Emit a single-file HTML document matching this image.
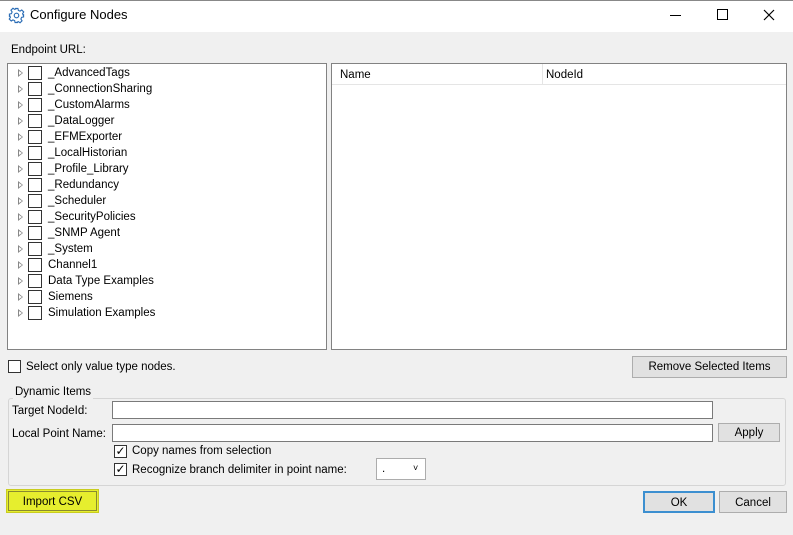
<!DOCTYPE html><html><head><style>
*{box-sizing:border-box}body{margin:0;width:793px;height:535px;background:#f0f0f0;font-family:"Liberation Sans",sans-serif;font-size:11.5px;line-height:16px;color:#000;position:relative;overflow:hidden}
.a{position:absolute}
.cb{position:absolute;width:13px;height:13px;border:1px solid #333;background:#fff}
.btn{position:absolute;background:#e1e1e1;border:1px solid #adadad;text-align:center}
.inp{position:absolute;background:#fff;border:1px solid #7a7a7a}
.row{position:absolute;left:0;height:16px;width:300px}
.row .tri{position:absolute;left:10px;top:4px;width:0;height:0;border-left:5px solid #888;border-top:4px solid transparent;border-bottom:4px solid transparent}
.row .tri:after{content:"";position:absolute;left:-4px;top:-2px;border-left:3px solid #fff;border-top:2px solid transparent;border-bottom:2px solid transparent}
.row .c{position:absolute;left:20px;top:1px;width:14px;height:14px;border:1px solid #333;background:#fff}
.row span{position:absolute;left:40px;top:0px}
</style></head><body>
<div class="a" style="left:0;top:0;width:793px;height:32px;background:#fff;border-top:1px solid #888"></div>
<svg class="a" style="left:8px;top:7px" width="17" height="17" viewBox="0 0 24 24" fill="none" stroke="#2a6cb5" stroke-width="1.6"><circle cx="12" cy="12" r="3.2"/><path d="M10 2h4l.6 2.8 2.4 1 2.4-1.6 2.8 2.8-1.6 2.4 1 2.4L22 10v4l-2.8.6-1 2.4 1.6 2.4-2.8 2.8-2.4-1.6-2.4 1L14 22h-4l-.6-2.8-2.4-1-2.4 1.6-2.8-2.8 1.6-2.4-1-2.4L2 14v-4l2.8-.6 1-2.4-1.6-2.4 2.8-2.8 2.4 1.6 2.4-1z"/></svg>
<div class="a" style="left:30px;top:7px;font-size:13px">Configure Nodes</div>
<div class="a" style="left:670px;top:15px;width:11px;height:1px;background:#000"></div>
<div class="a" style="left:717px;top:9px;width:11px;height:11px;border:1px solid #000"></div>
<svg class="a" style="left:763px;top:9px" width="12" height="12"><path d="M1 1L11 11M11 1L1 11" stroke="#000" stroke-width="1.2"/></svg>
<div class="a" style="left:11px;top:42px">Endpoint URL:</div>
<div class="a" style="left:7px;top:63px;width:320px;height:287px;background:#fff;border:1px solid #828282">
<div class="row" style="top:1px"><i class="tri"></i><i class="c"></i><span>_AdvancedTags</span></div>
<div class="row" style="top:17px"><i class="tri"></i><i class="c"></i><span>_ConnectionSharing</span></div>
<div class="row" style="top:33px"><i class="tri"></i><i class="c"></i><span>_CustomAlarms</span></div>
<div class="row" style="top:49px"><i class="tri"></i><i class="c"></i><span>_DataLogger</span></div>
<div class="row" style="top:65px"><i class="tri"></i><i class="c"></i><span>_EFMExporter</span></div>
<div class="row" style="top:81px"><i class="tri"></i><i class="c"></i><span>_LocalHistorian</span></div>
<div class="row" style="top:97px"><i class="tri"></i><i class="c"></i><span>_Profile_Library</span></div>
<div class="row" style="top:113px"><i class="tri"></i><i class="c"></i><span>_Redundancy</span></div>
<div class="row" style="top:129px"><i class="tri"></i><i class="c"></i><span>_Scheduler</span></div>
<div class="row" style="top:145px"><i class="tri"></i><i class="c"></i><span>_SecurityPolicies</span></div>
<div class="row" style="top:161px"><i class="tri"></i><i class="c"></i><span>_SNMP Agent</span></div>
<div class="row" style="top:177px"><i class="tri"></i><i class="c"></i><span>_System</span></div>
<div class="row" style="top:193px"><i class="tri"></i><i class="c"></i><span>Channel1</span></div>
<div class="row" style="top:209px"><i class="tri"></i><i class="c"></i><span>Data Type Examples</span></div>
<div class="row" style="top:225px"><i class="tri"></i><i class="c"></i><span>Siemens</span></div>
<div class="row" style="top:241px"><i class="tri"></i><i class="c"></i><span>Simulation Examples</span></div>
</div>
<div class="a" style="left:331px;top:63px;width:456px;height:287px;background:#fff;border:1px solid #828282">
<div class="a" style="left:0;top:0;width:454px;height:21px;border-bottom:1px solid #e5e5e5"></div>
<div class="a" style="left:210px;top:0;width:1px;height:21px;background:#e5e5e5"></div>
<div class="a" style="left:8px;top:3px">Name</div><div class="a" style="left:214px;top:3px">NodeId</div>
</div>
<div class="cb" style="left:8px;top:360px"></div>
<div class="a" style="left:26px;top:359px">Select only value type nodes.</div>
<div class="btn" style="left:632px;top:356px;width:155px;height:22px;padding-top:2px">Remove Selected Items</div>
<div class="a" style="left:8px;top:398px;width:778px;height:88px;border:1px solid #d5d5d5;border-radius:3px"></div>
<div class="a" style="left:13px;top:384px;padding:0 2px;background:#f0f0f0">Dynamic Items</div>
<div class="a" style="left:12px;top:403px">Target NodeId:</div>
<div class="inp" style="left:112px;top:401px;width:601px;height:18px"></div>
<div class="a" style="left:12px;top:426px">Local Point Name:</div>
<div class="inp" style="left:112px;top:424px;width:601px;height:18px"></div>
<div class="btn" style="left:718px;top:423px;width:62px;height:19px;padding-top:1px">Apply</div>
<div class="cb" style="left:114px;top:445px;text-align:center;line-height:11px;font-size:12px">✓</div>
<div class="a" style="left:132px;top:443px">Copy names from selection</div>
<div class="cb" style="left:114px;top:463px;text-align:center;line-height:11px;font-size:12px">✓</div>
<div class="a" style="left:132px;top:462px">Recognize branch delimiter in point name:</div>
<div class="inp" style="left:376px;top:458px;width:50px;height:22px;border-color:#acacac"><span class="a" style="left:5px;top:2px">.</span><span class="a" style="left:36px;top:1px;font-size:9px">˅</span></div>
<div class="a" style="left:6px;top:489px;width:93px;height:24px;background:#e6ee2e;border:1px solid #c8cc20"></div>
<div class="a" style="left:8px;top:491px;width:89px;height:20px;border:1px solid #8a8a30;text-align:center;padding-top:2px">Import CSV</div>
<div class="btn" style="left:643px;top:491px;width:72px;height:22px;padding-top:2px;border:2px solid #3c8fd0">OK</div>
<div class="btn" style="left:719px;top:491px;width:68px;height:22px;padding-top:3px">Cancel</div>
</body></html>
